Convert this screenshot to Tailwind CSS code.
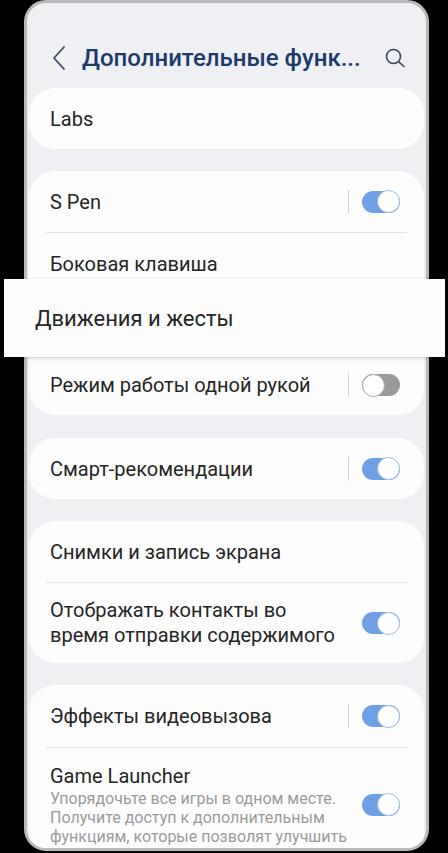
<!DOCTYPE html>
<html lang="ru">

<head>
    <meta charset="UTF-8">
    <meta name="viewport" content="width=device-width, initial-scale=1.0">
    <title>Дополнительные функции</title>
    <script src="https://cdn.jsdelivr.net/npm/@tailwindcss/browser@4"></script>
</head>

<body class="bg-black font-['Roboto',sans-serif] text-[#252525]">
    <div class="relative w-[448px] h-[853px] overflow-hidden bg-black">

        <!-- Phone frame -->
        <div class="ml-[24px] w-[405px] h-[851px] overflow-hidden rounded-b-[22px] rounded-t-[22px] border-[3px] border-[#b9b9bb] bg-[#eff0f4] px-[2px]">
            <!-- Header -->
            <div class="flex h-[85px] items-center pt-[24px] pl-[22px] pr-[18px]">
                <svg class="h-[26px] w-[16px] shrink-0" viewBox="0 0 16 26" fill="none" stroke="#35465f" stroke-width="1.7" stroke-linecap="round" stroke-linejoin="round">
                    <path d="M13 2 L3 13 L13 24" />
                </svg>
                <div class="ml-[15px] flex-1 whitespace-nowrap text-[24px] font-medium leading-[30px] text-[#1c3a6b]">Дополнительные функ...</div>
                <svg class="h-[22px] w-[22px] shrink-0" viewBox="0 0 22 22" fill="none" stroke="#35465f" stroke-width="1.6" stroke-linecap="round">
                    <circle cx="9.5" cy="9.5" r="7" />
                    <path d="M14.8 14.8 L20 19.5" />
                </svg>
            </div>

            <!-- Labs -->
            <div class="flex h-[61px] items-center rounded-[26px] bg-[#fdfdfd] pl-[21px] text-[20px]">Labs</div>

            <!-- S Pen group -->
            <div class="mt-[22px] rounded-[26px] bg-[#fdfdfd]">
                <div class="flex h-[61px] items-center justify-between pl-[21px] pr-[24px] text-[20px]">
                    <span>S Pen</span>
                    <div class="flex items-center">
                        <div class="mr-[13px] h-[24px] w-px bg-[#d2d2d4]"></div>
                        <div class="flex h-[22px] w-[38px] items-center justify-end rounded-full bg-[#6fa0e6]">
                            <div class="h-[23px] w-[23px] rounded-full border border-[#9dbcea] bg-white"></div>
                        </div>
                    </div>
                </div>
                <div class="mx-[17px] h-px bg-[#e4e4e6]"></div>
                <div class="flex h-[61px] items-center pl-[21px] text-[20px]">Боковая клавиша</div>
                <div class="flex h-[61px] items-center pl-[21px] text-[20px]">Движения и жесты</div>
                <div class="flex h-[60px] items-center justify-between pl-[21px] pr-[24px] text-[20px]">
                    <span>Режим работы одной рукой</span>
                    <div class="flex items-center">
                        <div class="mr-[13px] h-[24px] w-px bg-[#d2d2d4]"></div>
                        <div class="flex h-[22px] w-[38px] items-center justify-start rounded-full bg-[#9a9a9a]">
                            <div class="h-[23px] w-[23px] rounded-full border border-[#a8a8a8] bg-white"></div>
                        </div>
                    </div>
                </div>
            </div>

            <!-- Smart suggestions -->
            <div class="mt-[23px] flex h-[61px] items-center justify-between rounded-[26px] bg-[#fdfdfd] pl-[21px] pr-[24px] text-[20px]">
                <span>Смарт-рекомендации</span>
                <div class="flex items-center">
                    <div class="mr-[13px] h-[24px] w-px bg-[#d2d2d4]"></div>
                    <div class="flex h-[22px] w-[38px] items-center justify-end rounded-full bg-[#6fa0e6]">
                        <div class="h-[23px] w-[23px] rounded-full border border-[#9dbcea] bg-white"></div>
                    </div>
                </div>
            </div>

            <!-- Screenshots group -->
            <div class="mt-[22px] rounded-[26px] bg-[#fdfdfd]">
                <div class="flex h-[61px] items-center pl-[21px] text-[20px]">Снимки и запись экрана</div>
                <div class="mx-[17px] h-px bg-[#e4e4e6]"></div>
                <div class="flex h-[80px] items-center justify-between pl-[21px] pr-[24px] text-[20px] leading-[25px]">
                    <span>Отображать контакты во<br>время отправки содержимого</span>
                    <div class="flex h-[22px] w-[38px] items-center justify-end rounded-full bg-[#6fa0e6]">
                        <div class="h-[23px] w-[23px] rounded-full border border-[#9dbcea] bg-white"></div>
                    </div>
                </div>
            </div>

            <!-- Video call group -->
            <div class="mt-[22px] rounded-[26px] bg-[#fdfdfd] pb-[20px]">
                <div class="flex h-[62px] items-center justify-between pl-[21px] pr-[24px] text-[20px]">
                    <span>Эффекты видеовызова</span>
                    <div class="flex items-center">
                        <div class="mr-[13px] h-[24px] w-px bg-[#d2d2d4]"></div>
                        <div class="flex h-[22px] w-[38px] items-center justify-end rounded-full bg-[#6fa0e6]">
                            <div class="h-[23px] w-[23px] rounded-full border border-[#9dbcea] bg-white"></div>
                        </div>
                    </div>
                </div>
                <div class="mx-[17px] h-px bg-[#e4e4e6]"></div>
                <div class="flex items-center justify-between pl-[21px] pr-[24px] pt-[15px]">
                    <div>
                        <div class="text-[20px] leading-[26px]">Game Launcher</div>
                        <div class="text-[16px] leading-[19px] text-[#9b9b9b]">Упорядочьте все игры в одном месте.<br>Получите доступ к дополнительным<br>функциям, которые позволят улучшить</div>
                    </div>
                    <div class="flex h-[22px] w-[38px] items-center justify-end rounded-full bg-[#6fa0e6]">
                        <div class="h-[23px] w-[23px] rounded-full border border-[#9dbcea] bg-white"></div>
                    </div>
                </div>
            </div>
        </div>

        <!-- Highlighted item popped out of the list -->
        <div class="absolute left-[4px] top-[279px] flex h-[78px] w-[441px] items-center bg-[#fdfdfd] pl-[31px] text-[22px] shadow-[0_1px_4px_rgba(0,0,0,0.2)]">Движения и жесты</div>
    </div>
</body>

</html>
